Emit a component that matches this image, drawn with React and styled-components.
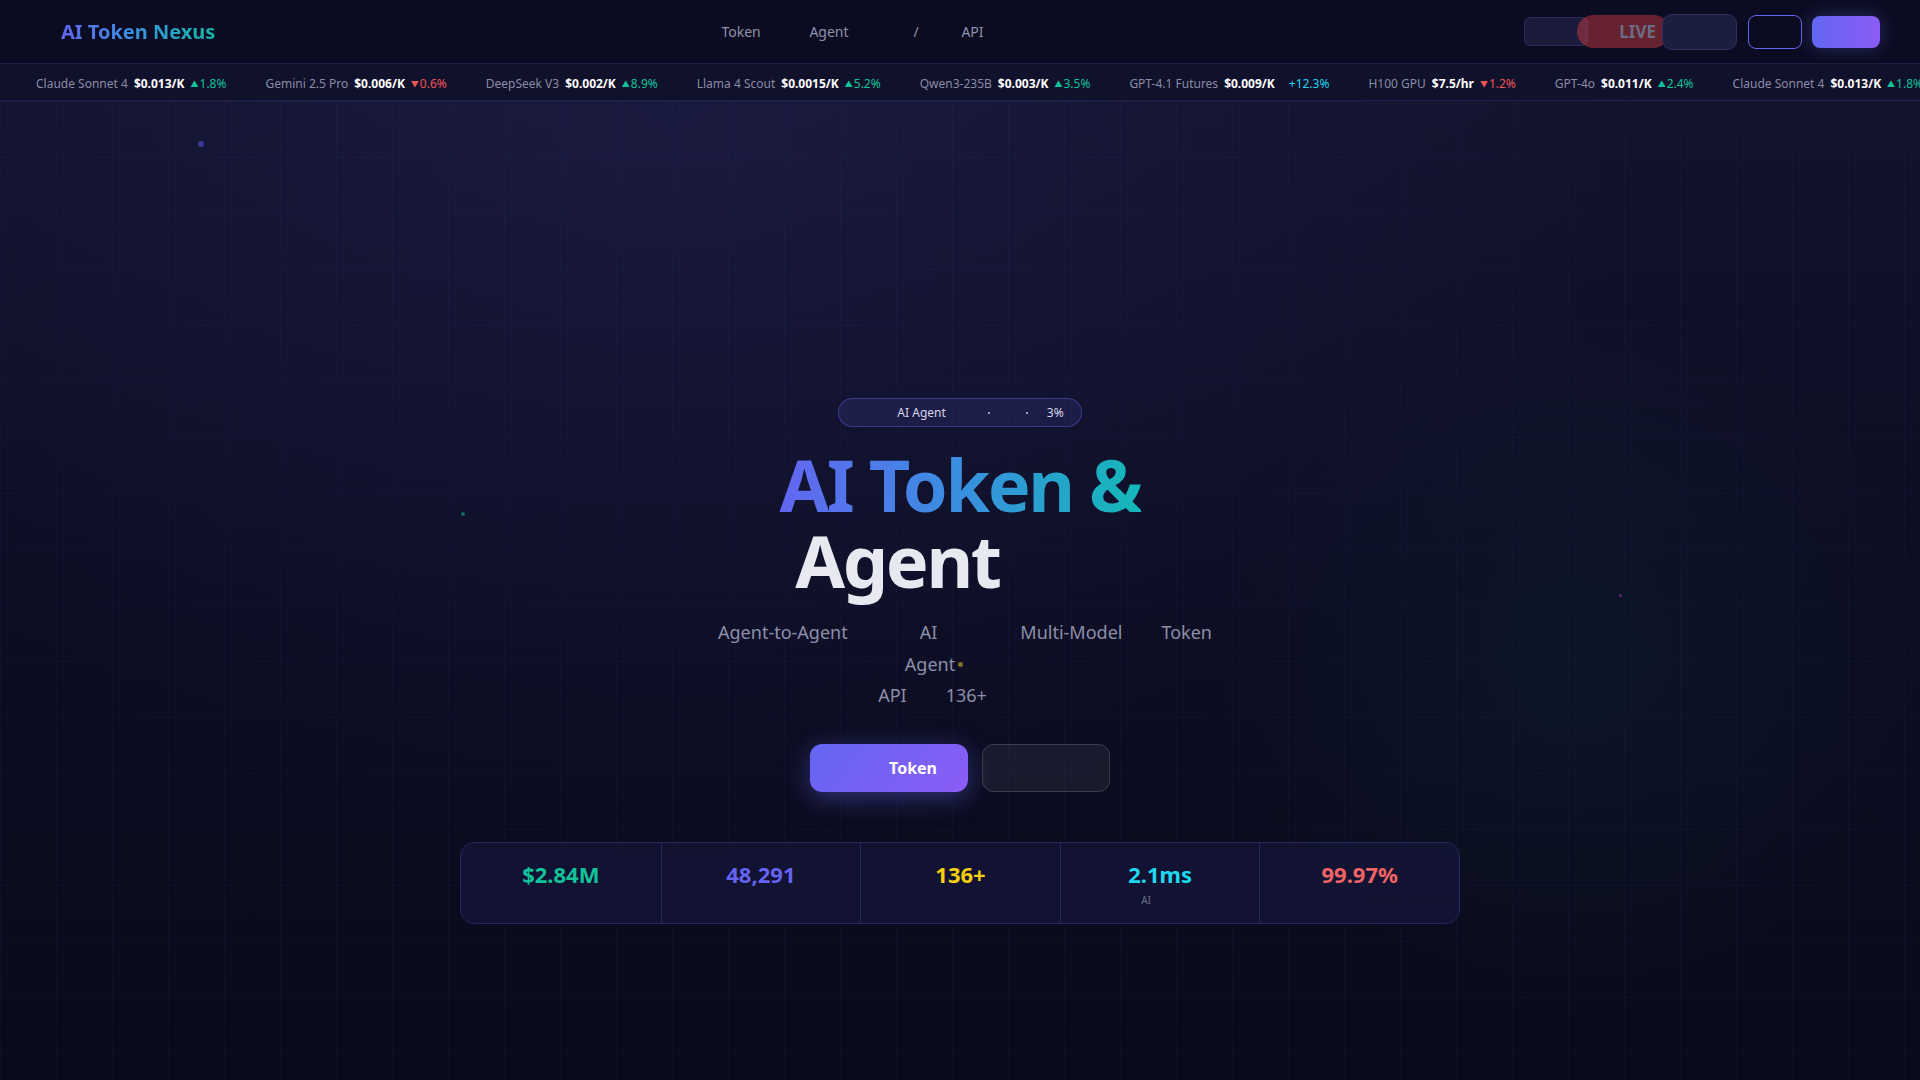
import React from 'react';
import styled, { createGlobalStyle } from 'styled-components';

const GlobalStyle = createGlobalStyle`
  html, body {
    margin: 0;
    padding: 0;
    background: #0a0b1e;
    font-family: "Noto Sans", "Noto Sans CJK SC", sans-serif;
  }
  * { box-sizing: border-box; }
`;

const Page = styled.div`
  min-height: 100vh;
  display: flex;
  flex-direction: column;
  background: #0a0b1e;
  overflow: hidden;
`;

const Header = styled.header`
  height: 64px;
  display: flex;
  align-items: center;
  padding: 0 40px 0 61px;
  background: #0b0c21;
  border-bottom: 1px solid #1d1e44;
`;

const Logo = styled.div`
  font-size: 20px;
  font-weight: 700;
  background: linear-gradient(90deg, #6366f1 0%, #3b8fe0 45%, #14b8a6 100%);
  -webkit-background-clip: text;
  background-clip: text;
  color: transparent;
`;

const Nav = styled.nav`
  display: flex;
  align-items: center;
  margin-left: 506px;
`;

const NavLink = styled.a`
  width: ${(p) => p.$w}px;
  font-size: 14px;
  color: #8f92ad;
  text-decoration: none;
`;

const Actions = styled.div`
  margin-left: auto;
  display: flex;
  align-items: center;
`;

const GhostBox = styled.div`
  width: 64px;
  height: 29px;
  border-radius: 6px;
  background: #1b1c3b;
  border: 1px solid #2a2b5c;
`;

const LivePill = styled.div`
  width: 93px;
  height: 33px;
  margin-left: -11px;
  border-radius: 17px;
  background: rgba(239, 68, 68, 0.4);
  display: flex;
  align-items: center;
  justify-content: flex-end;
  padding-right: 14px;
  font-size: 17px;
  font-weight: 700;
  color: #6a6c84;
`;

const StatusBox = styled.div`
  width: 75px;
  height: 36px;
  margin-left: -8px;
  border-radius: 10px;
  background: #1b1e3c;
  border: 1px solid #2d3166;
`;

const OutlineBtn = styled.button`
  width: 54px;
  height: 34px;
  margin-left: 11px;
  border-radius: 8px;
  background: #0b0c21;
  border: 1.5px solid #6366f1;
`;

const FillBtn = styled.button`
  width: 68px;
  height: 32px;
  margin-left: 10px;
  border: none;
  border-radius: 8px;
  background: linear-gradient(90deg, #6366f1, #8b5cf6);
  box-shadow: 0 0 18px rgba(99, 102, 241, 0.35);
`;

const Ticker = styled.div`
  height: 37px;
  display: flex;
  align-items: center;
  gap: 39px;
  padding: 2px 0 0 36px;
  background: #10112b;
  border-bottom: 1px solid #1f2050;
  white-space: nowrap;
  overflow: hidden;
`;

const TickItem = styled.div`
  display: flex;
  align-items: center;
  gap: 6px;
  font-size: 12px;
  flex-shrink: 0;
`;

const TickName = styled.span`
  color: #8a8ca6;
`;

const TickPrice = styled.span`
  color: #ffffff;
  font-weight: 700;
`;

const TickChange = styled.span`
  color: ${(p) => (p.$dir === 'down' ? '#ef5555' : p.$dir === 'hot' ? '#22d3ee' : '#10c39a')};
  margin-left: ${(p) => (p.$dir === 'hot' ? 8 : 0)}px;
`;

const Arrow = styled.span`
  font-size: 8px;
  margin-right: 1px;
  vertical-align: 1px;
`;

const Hero = styled.section`
  position: relative;
  flex: 1;
  display: flex;
  flex-direction: column;
  align-items: center;
  padding-top: 297px;
  background-color: #0b0c1f;
  background-image:
    linear-gradient(rgba(99, 102, 241, 0.045) 1px, transparent 1px),
    linear-gradient(90deg, rgba(99, 102, 241, 0.045) 1px, transparent 1px),
    radial-gradient(circle at 82% 58%, rgba(20, 184, 166, 0.05) 0%, transparent 22%),
    radial-gradient(ellipse at 35% 0%, rgba(60, 60, 150, 0.18) 0%, transparent 55%),
    linear-gradient(180deg, #12132c 0%, #0c0d22 50%, #090a1a 100%);
  background-size: 56px 56px, 56px 56px, 100% 100%, 100% 100%, 100% 100%;
`;

const Particle = styled.span`
  position: absolute;
  border-radius: 50%;
  width: ${(p) => p.$size}px;
  height: ${(p) => p.$size}px;
  background: ${(p) => p.$color};
`;

const Badge = styled.div`
  height: 29px;
  display: inline-flex;
  align-items: center;
  padding: 0 17px 0 58px;
  border-radius: 15px;
  background: rgba(99, 102, 241, 0.13);
  border: 1px solid rgba(99, 102, 241, 0.4);
  font-size: 12px;
  color: #d6d6ea;
`;

const BadgeDot = styled.span`
  width: 2px;
  height: 2px;
  border-radius: 50%;
  background: #c9c9dc;
  margin-left: ${(p) => p.$ml}px;
`;

const BadgeText = styled.span`
  margin-left: ${(p) => p.$ml || 0}px;
`;

const Title = styled.h1`
  margin: 20px 0 0;
  font-size: 72px;
  font-weight: 700;
  line-height: 1.05;
  letter-spacing: -2.4px;
  text-align: center;
`;

const GradientLine = styled.span`
  display: block;
  background: linear-gradient(90deg, #6366f1 0%, #3d8be3 45%, #14b8b8 100%);
  -webkit-background-clip: text;
  background-clip: text;
  color: transparent;
`;

const PlainLine = styled.span`
  display: block;
  color: #e8e8f0;
  padding-right: 125px;
`;

const Subtitle = styled.div`
  margin-top: 19px;
  font-size: 18px;
  line-height: 31.5px;
  color: #8c8fa9;
  text-align: center;
`;

const SubLine = styled.div`
  display: flex;
  justify-content: center;
  align-items: center;
`;

const Word = styled.span`
  margin-left: ${(p) => p.$ml || 0}px;
  margin-right: ${(p) => p.$mr || 0}px;
`;

const PulseDot = styled.span`
  width: 5px;
  height: 5px;
  border-radius: 50%;
  background: #7d6f1c;
  margin-left: 3px;
  margin-right: ${(p) => p.$mr}px;
`;

const ButtonRow = styled.div`
  margin-top: 32px;
  display: flex;
  gap: 14px;
`;

const PrimaryBtn = styled.button`
  width: 158px;
  height: 48px;
  border: none;
  border-radius: 12px;
  display: flex;
  align-items: center;
  justify-content: flex-end;
  padding-right: 31px;
  background: linear-gradient(135deg, #6366f1, #8b5cf6);
  box-shadow: 0 6px 26px rgba(99, 102, 241, 0.42);
  font-family: inherit;
  font-size: 16px;
  font-weight: 700;
  color: #ffffff;
`;

const SecondaryBtn = styled.button`
  width: 128px;
  height: 48px;
  border-radius: 12px;
  background: rgba(255, 255, 255, 0.06);
  border: 1px solid rgba(255, 255, 255, 0.14);
`;

const StatsCard = styled.div`
  margin-top: 50px;
  width: 1000px;
  display: grid;
  grid-template-columns: repeat(5, 1fr);
  border: 1px solid #26275c;
  border-radius: 14px;
  background: rgba(22, 22, 58, 0.75);
  overflow: hidden;
`;

const StatCell = styled.div`
  padding: 17px 10px 16px;
  text-align: center;
  border-left: ${(p) => (p.$first ? 'none' : '1px solid #26275c')};
`;

const StatValue = styled.div`
  font-size: 22px;
  font-weight: 700;
  line-height: 29px;
  color: ${(p) => p.$color};
`;

const StatLabel = styled.div`
  margin-top: 4px;
  font-size: 10px;
  line-height: 14px;
  color: #6b6e8a;
`;

const ticker = [
  { name: 'Claude Sonnet 4', price: '$0.013/K', change: '1.8%', dir: 'up' },
  { name: 'Gemini 2.5 Pro', price: '$0.006/K', change: '0.6%', dir: 'down' },
  { name: 'DeepSeek V3', price: '$0.002/K', change: '8.9%', dir: 'up' },
  { name: 'Llama 4 Scout', price: '$0.0015/K', change: '5.2%', dir: 'up' },
  { name: 'Qwen3-235B', price: '$0.003/K', change: '3.5%', dir: 'up' },
  { name: 'GPT-4.1 Futures', price: '$0.009/K', change: '+12.3%', dir: 'hot' },
  { name: 'H100 GPU', price: '$7.5/hr', change: '1.2%', dir: 'down' },
  { name: 'GPT-4o', price: '$0.011/K', change: '2.4%', dir: 'up' },
];

const stats = [
  { value: '$2.84M', color: '#10c39a', label: '' },
  { value: '48,291', color: '#6663f0', label: '' },
  { value: '136+', color: '#f5cf0c', label: '' },
  { value: '2.1ms', color: '#1fd8ee', label: 'AI' },
  { value: '99.97%', color: '#f26464', label: '' },
];

const App = () => {
  return (
    <Page>
      <GlobalStyle />
      <Header>
        <Logo>AI Token Nexus</Logo>
        <Nav>
          <NavLink $w={88}>Token</NavLink>
          <NavLink $w={104}>Agent</NavLink>
          <NavLink $w={48}>/</NavLink>
          <NavLink $w={30}>API</NavLink>
        </Nav>
        <Actions>
          <GhostBox />
          <LivePill>LIVE</LivePill>
          <StatusBox />
          <OutlineBtn />
          <FillBtn />
        </Actions>
      </Header>

      <Ticker>
        {[...ticker, ...ticker].map((t, i) => (
          <TickItem key={i}>
            <TickName>{t.name}</TickName>
            <TickPrice>{t.price}</TickPrice>
            <TickChange $dir={t.dir}>
              {t.dir === 'up' && <Arrow>▲</Arrow>}
              {t.dir === 'down' && <Arrow>▼</Arrow>}
              {t.change}
            </TickChange>
          </TickItem>
        ))}
      </Ticker>

      <Hero>
        <Particle $size={6} $color="#3a3a9e" style={{ left: 198, top: 40 }} />
        <Particle $size={4} $color="#0f6b5a" style={{ left: 461, top: 411 }} />
        <Particle $size={3} $color="#6a1f6e" style={{ left: 1619, top: 493 }} />

        <Badge>
          <BadgeText>AI Agent</BadgeText>
          <BadgeDot $ml={42} />
          <BadgeDot $ml={36} />
          <BadgeText $ml={19}>3%</BadgeText>
        </Badge>

        <Title>
          <GradientLine>AI Token &amp;</GradientLine>
          <PlainLine>Agent</PlainLine>
        </Title>

        <Subtitle>
          <SubLine>
            <Word $ml={10}>Agent-to-Agent</Word>
            <Word $ml={72}>AI</Word>
            <Word $ml={83}>Multi-Model</Word>
            <Word $ml={39}>Token</Word>
          </SubLine>
          <SubLine>
            <Word>Agent</Word>
            <PulseDot $mr={52} />
          </SubLine>
          <SubLine>
            <Word>API</Word>
            <Word $ml={39} $mr={55}>136+</Word>
          </SubLine>
        </Subtitle>

        <ButtonRow>
          <PrimaryBtn>Token</PrimaryBtn>
          <SecondaryBtn />
        </ButtonRow>

        <StatsCard>
          {stats.map((s, i) => (
            <StatCell key={s.value} $first={i === 0}>
              <StatValue $color={s.color}>{s.value}</StatValue>
              <StatLabel>
                {s.label ? <Word $mr={28}>{s.label}</Word> : '\u00a0'}
              </StatLabel>
            </StatCell>
          ))}
        </StatsCard>
      </Hero>
    </Page>
  );
};

export default App;
